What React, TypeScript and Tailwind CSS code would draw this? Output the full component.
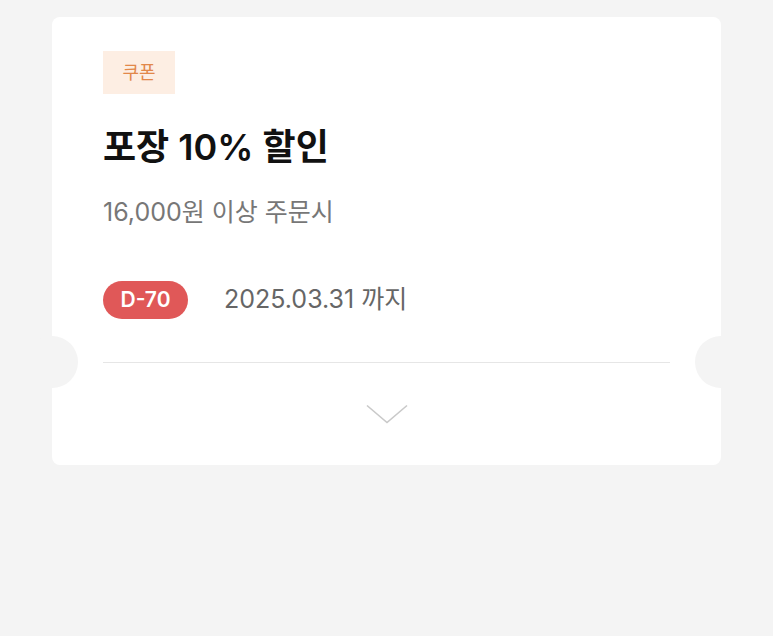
const font = "font-['Inter','Noto_Sans_CJK_KR',sans-serif]";

export default function App() {
  return (
    <div className={`min-h-[636px] bg-[#f4f4f4] px-[52px] pt-[17px] ${font}`}>
      <div className="relative w-[669px] rounded-lg bg-white">
        {/* ticket notches */}
        <div className="absolute left-[-26px] top-[319px] h-[52px] w-[52px] rounded-full bg-[#f4f4f4]" />
        <div className="absolute right-[-26px] top-[319px] h-[52px] w-[52px] rounded-full bg-[#f4f4f4]" />

        <div className="px-[51px] pt-[34px]">
          <div className="flex h-[43px] w-[72px] items-center justify-center bg-[#fdeee3] text-[18px] text-[#e2884a]">
            쿠폰
          </div>
          <h1 className="mt-[33px] text-[36px] font-semibold leading-[40px] text-[#111]">
            포장 10% 할인
          </h1>
          <p className="mt-[30px] text-[25px] leading-[30px] text-[#777]">
            16,000원 이상 주문시
          </p>
          <div className="mt-[54px] flex items-center">
            <span className="flex h-[38px] w-[85px] items-center justify-center rounded-full bg-[#e05858] text-[21px] font-semibold text-white">
              D-70
            </span>
            <span className="ml-[36px] text-[25px] text-[#666]">2025.03.31 까지</span>
          </div>
          <div className="mt-[43px] h-px bg-[#e6e6e6]" />
        </div>
        <div className="flex h-[102px] items-center justify-center">
          <svg width="42" height="20" viewBox="0 0 42 20" fill="none">
            <path d="M1 1.5L21 18.5L41 1.5" stroke="#c9c9c9" strokeWidth="1.6" />
          </svg>
        </div>
      </div>
    </div>
  );
}
